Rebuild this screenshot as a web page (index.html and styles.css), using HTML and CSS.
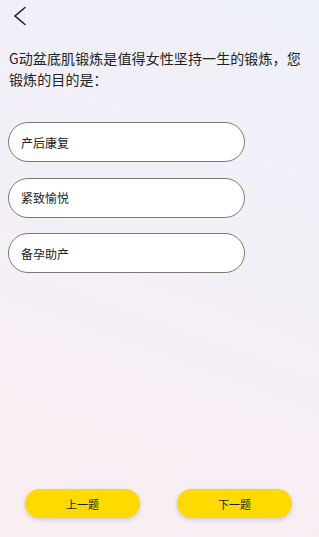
FILE: index.html
```html
<!DOCTYPE html>
<html lang="zh">

<head>
	<meta charset="UTF-8"/>
	<meta name="viewport" content="width=device-width, initial-scale=1.0"/>
	<title>盆底肌锻炼问卷</title>
	<link rel="stylesheet" href="styles.css">
</head>

<body>
<div class="page">
	<div class="header">
		<svg class="back" width="14" height="20" viewBox="0 0 14 20">
			<path d="M12 1.5 L2 10 L12 18.5" fill="none" stroke="#222" stroke-width="1.6" stroke-linecap="round" stroke-linejoin="miter"/>
		</svg>
	</div>
	<p class="question">G动盆底肌锻炼是值得女性坚持一生的锻炼，您锻炼的目的是：</p>
	<ul class="options">
		<li>产后康复</li>
		<li>紧致愉悦</li>
		<li>备孕助产</li>
	</ul>
	<div class="footer">
		<button class="prev">上一题</button>
		<button class="next">下一题</button>
	</div>
</div>
</body>

</html>
```

FILE: styles.css
```css
* {
	box-sizing: border-box;
}

body {
	margin: 0;
	font-family: "Noto Sans CJK SC", "Noto Sans", sans-serif;
	color: #222;
}

.page {
	width: 319px;
	height: 537px;
	display: flex;
	flex-direction: column;
	background: linear-gradient(200deg, #eef0f9 0%, #f4eff6 50%, #f9eef2 100%);
}

.header {
	padding: 6px 0 0 13px;
	height: 26px;
}

.back {
	display: block;
}

.question {
	margin: 22px 0 0;
	padding: 0 10px 0 9px;
	font-size: 14px;
	line-height: 21px;
	letter-spacing: 0.1px;
}

.options {
	margin: 32px 0 0;
	padding: 0 0 0 8px;
	list-style: none;
}

.options li {
	width: 237px;
	height: 40px;
	margin-bottom: 15.7px;
	padding-left: 12px;
	display: flex;
	align-items: center;
	font-size: 12px;
	background: #fff;
	border: 1px solid #7a7a7a;
	border-radius: 20px;
}

.footer {
	margin-top: auto;
	padding: 0 27px 19px 25px;
	display: flex;
	justify-content: space-between;
}

.footer button {
	width: 115px;
	height: 29px;
	appearance: none;
	border: none;
	border-radius: 15px;
	background: #ffda00;
	color: #222;
	font-family: inherit;
	font-size: 11px;
	box-shadow: 0 2px 4px rgba(120, 120, 160, 0.3);
	cursor: pointer;
}
```
